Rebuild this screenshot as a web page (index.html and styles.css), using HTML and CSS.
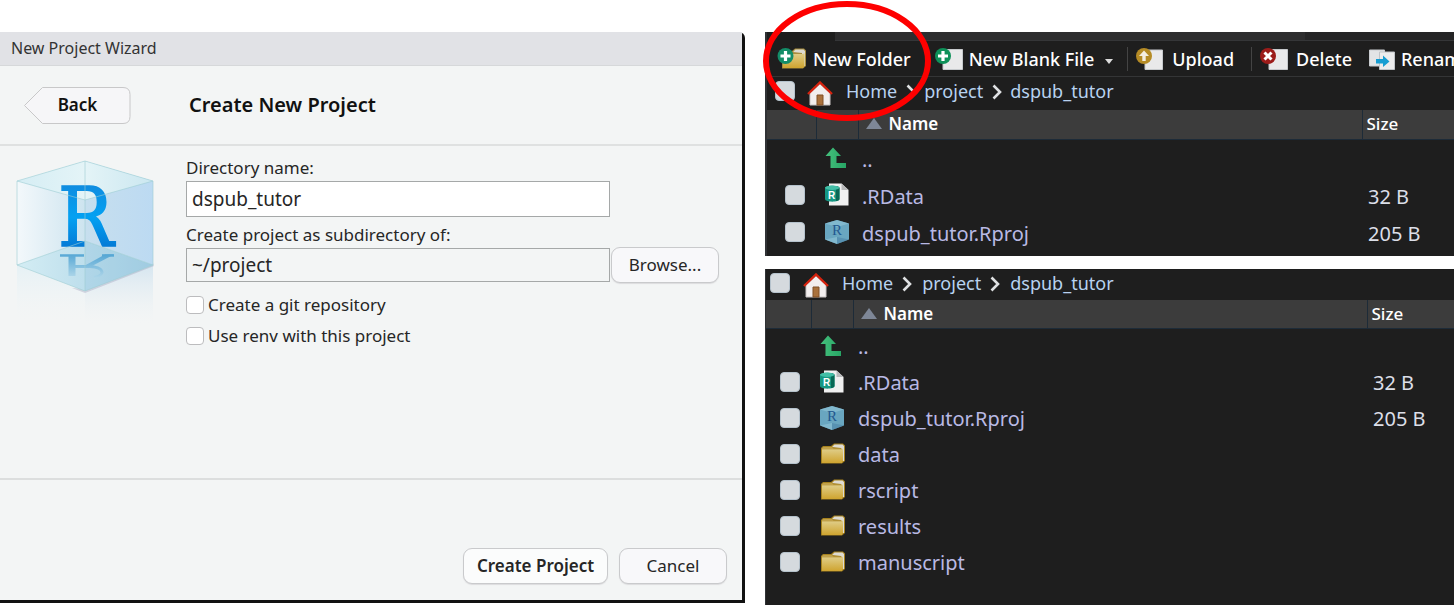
FILE: index.html
```html
<!DOCTYPE html>
<html lang="en">
<head>
<meta charset="utf-8">
<title>New Project Wizard</title>
<link rel="stylesheet" href="styles.css">
</head>
<body>
<svg class="defs" aria-hidden="true">
  <defs>
    <linearGradient id="gold" x1="0" y1="0" x2="0" y2="1"><stop offset="0" stop-color="#e0cf8c"/><stop offset="1" stop-color="#cfa42f"/></linearGradient>
    <linearGradient id="green" x1="0" y1="0" x2="1" y2="0"><stop offset="0" stop-color="#45c17d"/><stop offset="1" stop-color="#27a565"/></linearGradient>
    <linearGradient id="blueR" x1="0" y1="0" x2="0" y2="1"><stop offset="0" stop-color="#1583d8"/><stop offset=".5" stop-color="#03a1f2"/><stop offset="1" stop-color="#0462c4"/></linearGradient>
    <linearGradient id="fade" x1="0" y1="0" x2="0" y2="1"><stop offset="0" stop-color="#c9dfee" stop-opacity=".7"/><stop offset="1" stop-color="#e8f0f4" stop-opacity="0"/></linearGradient>
    <linearGradient id="fadeLeft" x1="0" y1="0" x2="0" y2="1"><stop offset="0" stop-color="#e2f0f5" stop-opacity=".8"/><stop offset="1" stop-color="#f2f5f6" stop-opacity="0"/></linearGradient>
    <linearGradient id="faceLeft"><stop offset="0" stop-color="#f3f8fb"/><stop offset="1" stop-color="#cde4ef"/></linearGradient>
    <linearGradient id="faceRight"><stop offset="0" stop-color="#c7dfee"/><stop offset="1" stop-color="#bcdaf2"/></linearGradient>
    <linearGradient id="faceTop"><stop offset="0" stop-color="#d5edf4"/><stop offset=".5" stop-color="#e4f4f7"/><stop offset="1" stop-color="#cbe7f0"/></linearGradient>
    <linearGradient id="floor"><stop offset="0" stop-color="#d4edf4"/><stop offset="1" stop-color="#a7d0e4"/></linearGradient>
    <linearGradient id="mirror" gradientUnits="userSpaceOnUse" x1="0" y1="100" x2="0" y2="126"><stop offset="0" stop-color="#3f9bd0"/><stop offset="1" stop-color="#b4d9ea"/></linearGradient>
  </defs>
  <symbol id="i-folder" viewBox="0 0 26 22">
    <path d="M1 20.500V5l2-2h8l3-2.500h9l2 2V18l-3 2.500z" fill="#a5811e"/>
    <path d="M12 4l2.500-2.500h8L24 3v15h-3V5z" fill="#dedbd2"/>
    <path d="M2 5l1.500-1H12l1.500 1.500H22V20H2z" fill="#c1a14a"/>
    <path d="M2 6.500h19.500L23 5.500V18l-1.500 2H2z" fill="url(#gold)"/>
  </symbol>
  <symbol id="i-newfolder" viewBox="0 0 30 22">
    <path d="M5 20.500V5l2-2h8l3-2.500h9l2 2V18l-3 2.500z" fill="#a88d3d"/>
    <path d="M16 4l2.500-2.500h8L28 3v15h-3V5z" fill="#dedbd2"/>
    <path d="M6 6h20l1.500-1V18L26 20H6z" fill="url(#gold)"/>
    <circle cx="8.500" cy="8" r="8" fill="#138d68"/>
    <path d="M8.500 3v10M3.500 8h10" stroke="#fff" stroke-width="3.200"/>
  </symbol>
  <symbol id="i-newfile" viewBox="0 0 28 22">
    <path d="M8 1.500h19.500v20H8z" fill="#e9e9ea" stroke="#c6c9cc"/>
    <circle cx="8" cy="8" r="8" fill="#0e9159"/>
    <path d="M8 3v10M3 8h10" stroke="#fff" stroke-width="3.200"/>
  </symbol>
  <symbol id="i-upload" viewBox="0 0 28 22">
    <path d="M9 2h17.500v19.500H9z" fill="#e9e9ea" stroke="#c6c9cc"/>
    <circle cx="8" cy="8" r="8" fill="#b58b25"/>
    <path d="M8 2.500l5 5.500H9.700v5H6.300V8H3z" fill="#f5eee0"/>
  </symbol>
  <symbol id="i-delete" viewBox="0 0 28 22">
    <path d="M9 1.500h18.500v20H9z" fill="#e9e9ea" stroke="#c6c9cc"/>
    <circle cx="8" cy="8" r="8" fill="#9c1c1a"/>
    <path d="M4.500 4.500l7 7M11.500 4.500l-7 7" stroke="#fff" stroke-width="3"/>
  </symbol>
  <symbol id="i-rename" viewBox="0 0 26 22">
    <path d="M.5 2h15v16H.5z" fill="#e2e4e6" stroke="#c9ccd0"/>
    <path d="M10.500 4H25.500v17.500h-15z" fill="#ececed" stroke="#c0c4c8"/>
    <path d="M7 11h7V7.500l6.500 6L14 19v-3.500H7z" fill="#169dd2"/>
  </symbol>
  <symbol id="i-home" viewBox="0 0 26 25">
    <path d="M3 12L13 3l10 9v12H3z" fill="#f2eeee" stroke="#c9c4c4"/>
    <path d="M1 13L13 1.500 25 13" fill="none" stroke="#d5220e" stroke-width="2.400"/>
    <path d="M10 14h6v10h-6z" fill="#a9713c" stroke="#805027"/>
  </symbol>
  <symbol id="i-up" viewBox="0 0 22 22">
    <path d="M8 .5L16 9h-4.500v7H21v5H5.500V9H.5z" fill="url(#green)"/>
  </symbol>
  <symbol id="i-rdata" viewBox="0 0 24 24">
    <path d="M4 .5h12.500L23.500 7v15.500H4z" fill="#f0f0f0"/>
    <path d="M16.500.5V7h7z" fill="#b9babb"/>
    <path d="M0 5c0-3 14-3 14.500 0v11c0 3.500-14.500 3.500-14.500 0z" fill="#159782"/>
    <path d="M11 3c2 .4 3.500 1 3.500 2v11c0 1-1 1.700-3.500 2z" fill="#086855"/>
    <ellipse cx="7.200" cy="4.800" rx="7.200" ry="2.200" fill="#42bea6"/>
  </symbol>
  <symbol id="i-rproj" viewBox="0 0 24 24">
    <path d="M12 0l12 3.500v16L12 24 0 19.500v-16z" fill="#69a6c0"/>
    <path d="M12 0l12 3.500L12 7 0 3.500zM12 24V17L0 19.500z" fill="#8cc0d4" opacity=".7"/>
    <path d="M12 17l12 2.500L12 24z" fill="#4c86a8" opacity=".6"/>
  </symbol>
</svg>

<main class="page">
  <section class="wizard" aria-label="New Project Wizard">
    <header class="wizard-title">New Project Wizard</header>
    <div class="wizard-head">
      <button class="back" type="button">
        <svg class="back-shape" viewBox="0 0 107 37" aria-hidden="true"><path d="M18.500.5H99q7 0 7 7v22q0 7-7 7H18.500L.5 18.500z" fill="#f6f6f8" stroke="#c8c8c9"/></svg>
        <span class="back-text">Back</span>
      </button>
      <h1 class="heading">Create New Project</h1>
    </div>
    <form class="wizard-body">
      <svg class="cube" width="150" height="170" viewBox="0 0 150 170" aria-hidden="true">
        <path d="M5 112l68 27v31H5z" fill="url(#fadeLeft)"/>
        <path d="M141 112l-68 27v31h68z" fill="url(#fade)"/>
        <path d="M60 135l13 5 69-27-1-3-68 26z" fill="#9999b8" opacity=".35"/>
        <path d="M5 28L73 8v80L5 112z" fill="url(#faceLeft)"/>
        <path d="M141 28L73 8v80l68 24z" fill="url(#faceRight)"/>
        <path d="M73 8l68 20-68 19L5 28z" fill="url(#faceTop)"/>
        <path d="M73 88l68 24-68 26L5 112z" fill="url(#floor)"/>
        <path d="M73 88v50l68-26z" fill="#8bbfdb" opacity=".25"/>
        <g fill="none" stroke="url(#mirror)" opacity=".85">
          <path d="M48 102.500h24M90 102.500h12" stroke-width="2.500"/>
          <path d="M60 103v20" stroke-width="7"/>
          <path d="M102 101.500h-9L72 113h8z" fill="url(#mirror)" stroke="none"/>
          <path d="M60 113.500h18q12 1 12 6-1 4-8 5" stroke-width="3"/>
        </g>
        <text x="46" y="93" class="r-large" fill="url(#blueR)" stroke="url(#blueR)" stroke-width="1.500">R</text>
        <path d="M5 28L73 8l68 20v84l-68 26L5 112zM5 28l68 19 68-19M73 8v39M5 112l68-24 68 24M73 47v91" fill="none" stroke="#9dcdd3" opacity=".6"/>
      </svg>
      <div class="fields">
        <label class="label" for="dir">Directory name:</label>
        <input class="text-box" id="dir" type="text" value="dspub_tutor">
        <label class="label label-parent" for="parent">Create project as subdirectory of:</label>
        <div class="browse-row">
          <input class="text-box text-box-locked" id="parent" type="text" value="~/project" readonly>
          <button class="button browse" type="button">Browse...</button>
        </div>
        <label class="option"><input class="tick" type="checkbox">Create a git repository</label>
        <label class="option"><input class="tick" type="checkbox">Use renv with this project</label>
      </div>
    </form>
    <footer class="wizard-foot">
      <button class="button primary" type="button">Create Project</button>
      <button class="button cancel" type="button">Cancel</button>
    </footer>
  </section>

  <div class="files">
    <section class="pane pane-top" aria-label="Files">
      <div class="tabs"></div>
      <div class="toolbar">
        <button class="tool" type="button"><svg width="30" height="22"><use href="#i-newfolder"/></svg>New Folder</button>
        <button class="tool tool-menu" type="button"><svg width="28" height="22"><use href="#i-newfile"/></svg>New Blank File<span class="caret"></span></button>
        <button class="tool tool-ruled" type="button"><svg width="28" height="22"><use href="#i-upload"/></svg>Upload</button>
        <button class="tool tool-ruled" type="button"><svg width="28" height="22"><use href="#i-delete"/></svg>Delete</button>
        <button class="tool" type="button"><svg width="26" height="22"><use href="#i-rename"/></svg>Rename</button>
      </div>
      <nav class="crumbs" aria-label="Path">
        <input class="check" type="checkbox" aria-label="Select all">
        <svg class="home" width="26" height="25"><use href="#i-home"/></svg>
        <a class="crumb" href="#">Home</a>
        <svg class="chevron" width="10" height="16" viewBox="0 0 10 16"><path d="M1.500 1.500L8 8l-6.500 6.500" fill="none" stroke="#dfe1e3" stroke-width="2.600"/></svg>
        <a class="crumb" href="#">project</a>
        <svg class="chevron" width="10" height="16" viewBox="0 0 10 16"><path d="M1.500 1.500L8 8l-6.500 6.500" fill="none" stroke="#dfe1e3" stroke-width="2.600"/></svg>
        <a class="crumb" href="#">dspub_tutor</a>
      </nav>
      <table class="list">
        <thead><tr><th class="c-check"></th><th class="c-icon"></th><th class="c-name"><span class="sort"></span>Name</th><th class="c-size">Size</th></tr></thead>
        <tbody>
          <tr><td></td><td><svg width="22" height="22"><use href="#i-up"/></svg></td><td><a class="file" href="#">..</a></td><td></td></tr>
          <tr><td><input class="check" type="checkbox" aria-label=".RData"></td><td><svg width="24" height="24"><use href="#i-rdata"/><text x="3" y="16" class="r-small">R</text></svg></td><td><a class="file" href="#">.RData</a></td><td>32 B</td></tr>
          <tr><td><input class="check" type="checkbox" aria-label="dspub_tutor.Rproj"></td><td><svg width="24" height="24"><use href="#i-rproj"/><text x="7" y="15" class="r-medium">R</text></svg></td><td><a class="file" href="#">dspub_tutor.Rproj</a></td><td>205 B</td></tr>
        </tbody>
      </table>
      <svg class="ring" width="170" height="122" viewBox="0 0 170 122" aria-hidden="true"><ellipse cx="85" cy="61" rx="81" ry="57" fill="none" stroke="#fe0000" stroke-width="6"/></svg>
    </section>

    <section class="pane pane-bottom" aria-label="Files with folders">
      <nav class="crumbs" aria-label="Path">
        <input class="check" type="checkbox" aria-label="Select all">
        <svg class="home" width="26" height="25"><use href="#i-home"/></svg>
        <a class="crumb" href="#">Home</a>
        <svg class="chevron" width="10" height="16" viewBox="0 0 10 16"><path d="M1.500 1.500L8 8l-6.500 6.500" fill="none" stroke="#dfe1e3" stroke-width="2.600"/></svg>
        <a class="crumb" href="#">project</a>
        <svg class="chevron" width="10" height="16" viewBox="0 0 10 16"><path d="M1.500 1.500L8 8l-6.500 6.500" fill="none" stroke="#dfe1e3" stroke-width="2.600"/></svg>
        <a class="crumb" href="#">dspub_tutor</a>
      </nav>
      <table class="list">
        <thead><tr><th class="c-check"></th><th class="c-icon"></th><th class="c-name"><span class="sort"></span>Name</th><th class="c-size">Size</th></tr></thead>
        <tbody>
          <tr><td></td><td><svg width="22" height="22"><use href="#i-up"/></svg></td><td><a class="file" href="#">..</a></td><td></td></tr>
          <tr><td><input class="check" type="checkbox" aria-label=".RData"></td><td><svg width="24" height="24"><use href="#i-rdata"/><text x="3" y="16" class="r-small">R</text></svg></td><td><a class="file" href="#">.RData</a></td><td>32 B</td></tr>
          <tr><td><input class="check" type="checkbox" aria-label="dspub_tutor.Rproj"></td><td><svg width="24" height="24"><use href="#i-rproj"/><text x="7" y="15" class="r-medium">R</text></svg></td><td><a class="file" href="#">dspub_tutor.Rproj</a></td><td>205 B</td></tr>
          <tr><td><input class="check" type="checkbox" aria-label="data"></td><td><svg width="26" height="22"><use href="#i-folder"/></svg></td><td><a class="file" href="#">data</a></td><td></td></tr>
          <tr><td><input class="check" type="checkbox" aria-label="rscript"></td><td><svg width="26" height="22"><use href="#i-folder"/></svg></td><td><a class="file" href="#">rscript</a></td><td></td></tr>
          <tr><td><input class="check" type="checkbox" aria-label="results"></td><td><svg width="26" height="22"><use href="#i-folder"/></svg></td><td><a class="file" href="#">results</a></td><td></td></tr>
          <tr><td><input class="check" type="checkbox" aria-label="manuscript"></td><td><svg width="26" height="22"><use href="#i-folder"/></svg></td><td><a class="file" href="#">manuscript</a></td><td></td></tr>
        </tbody>
      </table>
    </section>
  </div>
</main>
</body>
</html>
```
FILE: styles.css
```css
* { box-sizing: border-box; }
body {
  margin: 0;
  background: #fff;
  font-family: "Noto Sans", "Open Sans", sans-serif;
  font-size: 17px;
  line-height: 24px;
}
button, input { font: inherit; color: inherit; margin: 0; }
button { cursor: pointer; }
a { text-decoration: none; }
.defs { position: absolute; width: 0; height: 0; }
.r-large { font: 82px "DejaVu Serif Condensed", "DejaVu Serif", serif; }
.r-medium { font: 15px "Liberation Serif", serif; fill: #23588f; }
.r-small { font: bold 10px "Liberation Sans", sans-serif; fill: #fff; }

.page {
  display: grid;
  grid-template-columns: 745fr 689fr;
  gap: 20px;
  min-height: 100vh;
  padding-top: 32px;
}

/* Wizard */
.wizard {
  display: flex;
  flex-direction: column;
  margin-bottom: 2px;
  background: #f3f5f5;
  border-right: 3px solid #111;
  border-bottom: 3px solid #111;
  border-top-right-radius: 6px;
  color: #262626;
  min-width: 0;
}
.wizard-title {
  padding: 4px 11px 5px;
  background: #e1e2e6;
  border-bottom: 1px solid #d6d8da;
  font-size: 16px;
  color: #333;
}
.wizard-head {
  display: flex;
  align-items: center;
  gap: 58px;
  height: 80px;
  padding-left: 24px;
  border-bottom: 2px solid #dfe1e1;
}
.back {
  display: grid;
  place-items: center;
  width: 107px;
  height: 37px;
  padding: 0;
  border: 0;
  background: none;
  font-size: 17px;
  font-weight: 600;
  color: #111;
}
.back-shape, .back-text { grid-area: 1 / 1; }
.back-shape { width: 107px; height: 37px; }
.heading { margin: 0; font-size: 20px; font-weight: 600; color: #111; }
.wizard-body {
  display: flex;
  flex: 1;
  gap: 24px;
  padding: 10px 24px 0 12px;
  border-bottom: 2px solid #dcdede;
}
.cube { flex: none; margin-top: -3px; }
.fields { display: flex; flex-direction: column; flex: 1; min-width: 0; }
.label { height: 25px; }
.label-parent { margin-top: 6px; }
.text-box {
  width: 424px;
  max-width: 100%;
  height: 36px;
  padding: 0 5px;
  border: 1px solid #a5a8a8;
  border-radius: 0;
  background: #fff;
  font-size: 19px;
}
.text-box-locked { flex: 1; min-width: 0; height: 34px; background: #f3f5f5; }
.browse-row { display: flex; align-items: center; gap: 1px; margin: -1px -1px 6px 0; }
.button {
  height: 36px;
  padding: 0;
  border: 1px solid #c9cacc;
  border-radius: 9px;
  background: #f8f8fa;
  box-shadow: 0 1px 1px #dcdcde;
}
.browse { width: 108px; }
.option { display: flex; align-items: center; gap: 4px; height: 31px; }
.tick {
  appearance: none;
  width: 18px;
  height: 18px;
  border: 1px solid #bcbcbe;
  border-radius: 4px;
  background: #fff;
}
.wizard-foot {
  display: flex;
  justify-content: flex-end;
  align-items: flex-end;
  gap: 11px;
  height: 120px;
  padding: 0 15px 16px;
}
.primary { width: 145px; font-weight: 600; background: #fbfcfc; }
.cancel { width: 108px; }

/* File panes */
.files { display: flex; flex-direction: column; gap: 13px; min-width: 0; }
.pane { background: #1e1e1e; border-left: 2px solid #303235; color: #dcdfe8; }
.pane-top { position: relative; padding-bottom: 6px; }
.pane-bottom { flex: 1; border-left-width: 1px; }
.ring { position: absolute; left: -5px; top: -32px; }
.tabs { height: 9px; margin-left: 68px; background: linear-gradient(90deg, #2d2d2e 76%, #252526 76%); border-bottom: 1px solid #353638; }
.toolbar {
  display: flex;
  align-items: center;
  height: 36px;
  padding-left: 10px;
  border-bottom: 1px solid #343536;
  overflow: hidden;
}
.tool {
  display: flex;
  align-items: center;
  gap: 6px;
  flex: none;
  padding: 0;
  border: 0;
  margin-right: 24px;
  background: none;
  color: #fff;
  font-size: 18px;
  font-weight: 500;
  white-space: nowrap;
}
.tool-menu { margin-right: 14px; }
.tool-ruled { gap: 8px; margin-right: 17px; padding-left: 8px; border-left: 1px solid #444; }
.caret { margin: 6px 0 0 5px; border: 4px solid transparent; border-top: 5px solid #ddd; border-bottom: 0; }
.crumbs { display: flex; align-items: center; height: 33px; padding: 0 0 6px 8px; font-size: 18px; }
.home { margin: 6px 13px 0 12px; }
.crumb { color: #b8d2f0; }
.chevron { margin: 2px 8px 0 9px; }
.check {
  appearance: none;
  display: block;
  width: 20px;
  height: 20px;
  border: 1px solid #b5c2cc;
  border-radius: 4px;
  background: #d5dade;
}
.list { width: 100%; table-layout: fixed; border-collapse: collapse; font-size: 20px; }
th {
  height: 29px;
  padding: 0 0 0 4px;
  background: #3c3c3c;
  border-right: 1px solid #1d2b38;
  border-bottom: 1px solid #1d2b38;
  color: #fff;
  font-size: 17px;
  font-weight: 600;
  text-align: left;
}
td { height: 37px; padding: 0 0 0 6px; vertical-align: middle; }
td:first-child { padding-left: 18px; }
td:nth-child(2) { padding-left: 9px; }
td svg { display: block; }
td:nth-child(3) { padding: 5px 0 0 4px; }
td:nth-child(4) { padding-top: 5px; }
.file { color: #b9b9e4; }
.c-check { width: 49px; }
.c-icon { width: 42px; }
.c-size { width: 92px; border-right: 0; font-weight: 500; }
.sort {
  display: inline-block;
  margin: 0 7px 1px 3px;
  border: 8px solid transparent;
  border-top: 0;
  border-bottom: 11px solid #7e8797;
}
.pane-bottom .crumbs { height: 31px; padding: 0 0 4px 4px; }
.pane-bottom .home { margin-left: 13px; }
.pane-bottom .chevron { margin: 2px 10px 0 9px; }
.pane-bottom th { height: 28px; }
.pane-bottom td { height: 36px; }
.pane-bottom td:first-child { padding-left: 14px; }
.pane-bottom td:nth-child(3), .pane-bottom td:nth-child(4) { padding-top: 1px; }
.pane-bottom td:nth-child(3) { padding-left: 5px; }
.pane-bottom .c-check { width: 45px; }
.pane-bottom .c-size { width: 87px; }
```
